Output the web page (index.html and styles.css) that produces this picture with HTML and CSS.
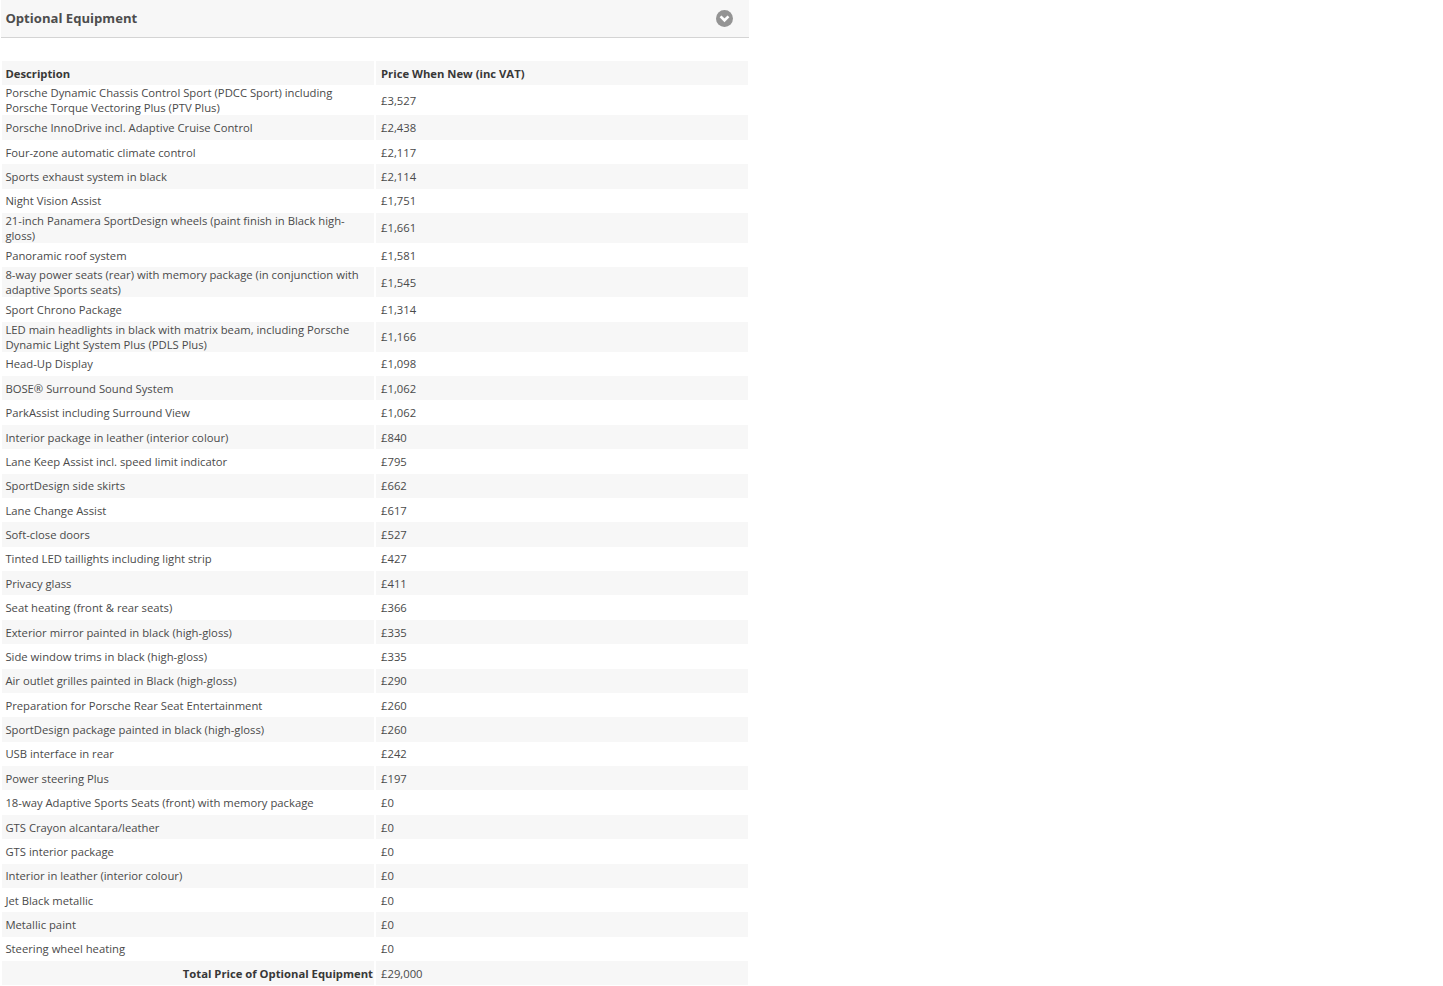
FILE: index.html
```html
<!DOCTYPE html>
<html lang="en">
<head>
<meta charset="utf-8">
<title>Optional Equipment</title>
<link rel="stylesheet" href="styles.css">
</head>
<body>
<section class="panel">
<header class="panel-head">
<h2>Optional Equipment</h2>
<svg class="chev" width="17" height="17" viewBox="0 0 18 18" aria-hidden="true"><circle cx="9" cy="9" r="9" fill="#949494"/><path d="M4.8 6.8 9 10.9l4.2-4.1" fill="none" stroke="#fff" stroke-width="2.8"/></svg>
</header>
<div class="rows">
<div class="row th"><div>Description</div><div>Price When New (inc VAT)</div></div>
<div class="row two"><div>Porsche Dynamic Chassis Control Sport (PDCC Sport) including Porsche Torque Vectoring Plus (PTV Plus)</div><div>£3,527</div></div>
<div class="row alt"><div>Porsche InnoDrive incl. Adaptive Cruise Control</div><div>£2,438</div></div>
<div class="row"><div>Four-zone automatic climate control</div><div>£2,117</div></div>
<div class="row alt"><div>Sports exhaust system in black</div><div>£2,114</div></div>
<div class="row"><div>Night Vision Assist</div><div>£1,751</div></div>
<div class="row alt two"><div>21-inch Panamera SportDesign wheels (paint finish in Black high-gloss)</div><div>£1,661</div></div>
<div class="row"><div>Panoramic roof system</div><div>£1,581</div></div>
<div class="row alt two"><div>8-way power seats (rear) with memory package (in conjunction with adaptive Sports seats)</div><div>£1,545</div></div>
<div class="row"><div>Sport Chrono Package</div><div>£1,314</div></div>
<div class="row alt two"><div>LED main headlights in black with matrix beam, including Porsche Dynamic Light System Plus (PDLS Plus)</div><div>£1,166</div></div>
<div class="row"><div>Head-Up Display</div><div>£1,098</div></div>
<div class="row alt"><div>BOSE® Surround Sound System</div><div>£1,062</div></div>
<div class="row"><div>ParkAssist including Surround View</div><div>£1,062</div></div>
<div class="row alt"><div>Interior package in leather (interior colour)</div><div>£840</div></div>
<div class="row"><div>Lane Keep Assist incl. speed limit indicator</div><div>£795</div></div>
<div class="row alt"><div>SportDesign side skirts</div><div>£662</div></div>
<div class="row"><div>Lane Change Assist</div><div>£617</div></div>
<div class="row alt"><div>Soft-close doors</div><div>£527</div></div>
<div class="row"><div>Tinted LED taillights including light strip</div><div>£427</div></div>
<div class="row alt"><div>Privacy glass</div><div>£411</div></div>
<div class="row"><div>Seat heating (front &amp; rear seats)</div><div>£366</div></div>
<div class="row alt"><div>Exterior mirror painted in black (high-gloss)</div><div>£335</div></div>
<div class="row"><div>Side window trims in black (high-gloss)</div><div>£335</div></div>
<div class="row alt"><div>Air outlet grilles painted in Black (high-gloss)</div><div>£290</div></div>
<div class="row"><div>Preparation for Porsche Rear Seat Entertainment</div><div>£260</div></div>
<div class="row alt"><div>SportDesign package painted in black (high-gloss)</div><div>£260</div></div>
<div class="row"><div>USB interface in rear</div><div>£242</div></div>
<div class="row alt"><div>Power steering Plus</div><div>£197</div></div>
<div class="row"><div>18-way Adaptive Sports Seats (front) with memory package</div><div>£0</div></div>
<div class="row alt"><div>GTS Crayon alcantara/leather</div><div>£0</div></div>
<div class="row"><div>GTS interior package</div><div>£0</div></div>
<div class="row alt"><div>Interior in leather (interior colour)</div><div>£0</div></div>
<div class="row"><div>Jet Black metallic</div><div>£0</div></div>
<div class="row alt"><div>Metallic paint</div><div>£0</div></div>
<div class="row"><div>Steering wheel heating</div><div>£0</div></div>
<div class="row alt total"><div>Total Price of Optional Equipment</div><div>£29,000</div></div>
</div>
</section>
</body>
</html>
```
FILE: styles.css
```css
html, body { margin: 0; background: #fff; }
body { font-family: "Open Sans", "Liberation Sans", sans-serif; font-size: 11.27px; line-height: 15px; color: #4a4a4a; }
.panel { width: 749px; }
.panel-head { height: 37px; margin-left: 1px; padding: 0 16.5px 0 4.4px; display: flex; align-items: center; justify-content: space-between; background: #f7f7f7; border-bottom: 1px solid #d4d4d4; }
.panel-head h2 { margin: 0; font-size: 13.1px; font-weight: 700; color: #4d4d4d; }
.chev { display: block; }
.rows { margin: 23.08px 0 0 2px; width: 746px; display: flex; flex-direction: column; }
.row { display: grid; grid-template-columns: 372px 372px; column-gap: 2px; height: 24.38px; }
.row.two { height: 30px; }
.row > div { display: flex; align-items: center; padding-left: 3.4px; }
.row > div + div { padding-left: 5px; }
.row > div:first-child { padding-right: 12px; }
.alt > div, .th > div { background: #f7f7f7; }
.th { font-weight: 700; color: #383838; }
.total > div:first-child { justify-content: flex-end; padding-right: 1px; font-weight: 700; color: #383838; }
```
